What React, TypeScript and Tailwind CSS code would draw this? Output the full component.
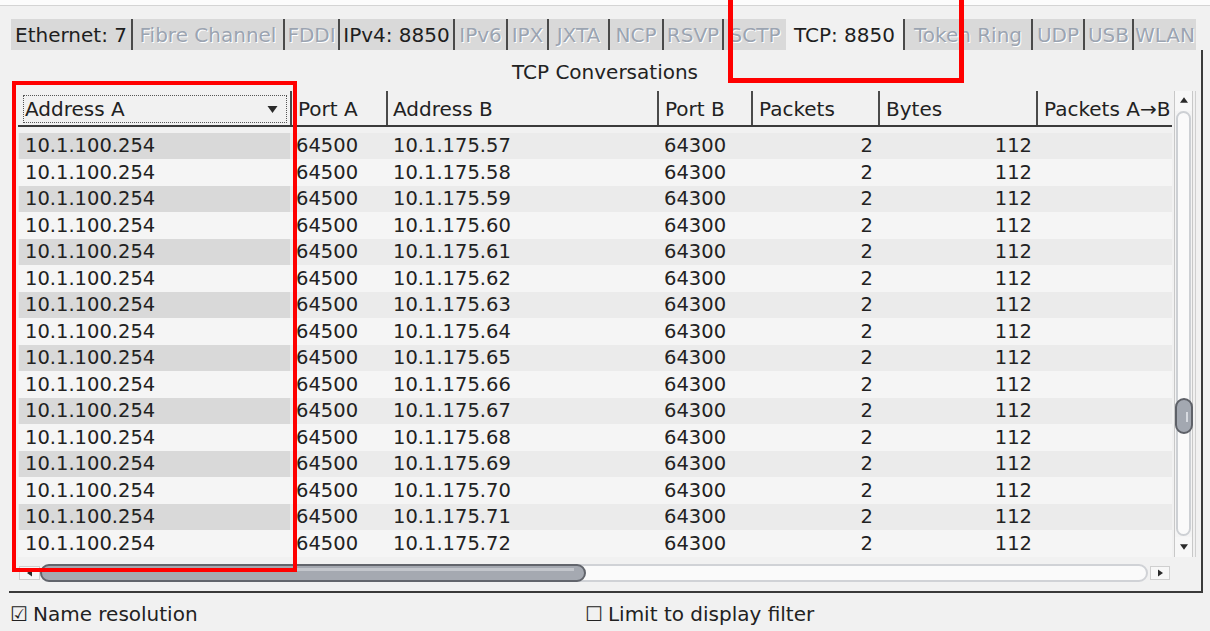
import React from "react";

const tabs = [
  { label: "Ethernet: 7", w: 120, enabled: true, sep: false },
  { label: "Fibre Channel", w: 152, enabled: false, sep: true },
  { label: "FDDI", w: 55, enabled: false, sep: true },
  { label: "IPv4: 8850", w: 115, enabled: true, sep: true },
  { label: "IPv6", w: 53, enabled: false, sep: true },
  { label: "IPX", w: 41, enabled: false, sep: true },
  { label: "JXTA", w: 61, enabled: false, sep: true },
  { label: "NCP", w: 54, enabled: false, sep: true },
  { label: "RSVP", w: 60, enabled: false, sep: true },
  { label: "SCTP", w: 64, enabled: false, sep: true },
  { label: "TCP: 8850", w: 117, enabled: true, sep: false, active: true },
  { label: "Token Ring", w: 128, enabled: false, sep: true },
  { label: "UDP", w: 52, enabled: false, sep: true },
  { label: "USB", w: 49, enabled: false, sep: true },
  { label: "WLAN", w: 64, enabled: false, sep: true },
];

const rows = Array.from({ length: 16 }, (_, i) => ({
  addrA: "10.1.100.254",
  portA: "64500",
  addrB: `10.1.175.${57 + i}`,
  portB: "64300",
  packets: "2",
  bytes: "112",
}));

const Tab = ({ t }: { t: (typeof tabs)[number] }) => (
  <div
    style={{ width: t.w }}
    className={`flex h-full shrink-0 items-center justify-center whitespace-nowrap text-[20px] ${
      t.active ? "bg-[#f1f1f1] text-[#1e1e1e]" : "bg-[#d9d9d9]"
    } ${t.sep ? "border-l-2 border-[#4a4a4a]" : ""} ${
      t.enabled ? "text-[#1e1e1e]" : "text-[#9ba4b1] [text-shadow:1px_1px_0_#ffffff]"
    }`}
  >
    {t.label}
  </div>
);

const Tri = ({ dir, className }: { dir: "up" | "down" | "left" | "right"; className?: string }) => {
  const pts = {
    up: "0,7 5,0 10,7",
    down: "0,0 10,0 5,7",
    left: "7,0 7,10 0,5",
    right: "0,0 0,10 7,5",
  }[dir];
  const vb = dir === "up" || dir === "down" ? "0 0 10 7" : "0 0 7 10";
  return (
    <svg viewBox={vb} className={className}>
      <polygon points={pts} fill="#2a2a2a" />
    </svg>
  );
};

export default function App() {
  return (
    <div className="relative h-[631px] w-[1210px] overflow-hidden bg-[#f1f1f1] font-['DejaVu_Sans',sans-serif] text-[#222]">
      <div className="h-[6px] border-b border-[#d4d4d4] bg-[#fcfcfc]" />

      {/* tab strip */}
      <div className="ml-[11px] mt-[13px] flex h-[31px]">
        {tabs.map((t) => (
          <Tab key={t.label} t={t} />
        ))}
      </div>

      {/* tab content */}
      <div className="ml-[9px] flex h-[543px] w-[1194px] flex-col border-b-2 border-r-2 border-[#3a3a3a]">
        <div className="flex h-[41px] items-center justify-center pt-[3px] text-[20px]">TCP Conversations</div>

        <div className="ml-[9px] flex h-[466px]">
          <div className="w-[1154px] overflow-hidden">
            {/* header */}
            <div className="flex h-[36px] border-b-2 border-[#3a3a3a] text-[20px] whitespace-nowrap">
              <div className="w-[274px] shrink-0 border-r-2 border-[#4a4a4a] pt-[4px]">
                <div className="ml-[5px] mr-[3px] flex h-[28px] items-center justify-between border border-dotted border-[#555] pl-[1px] pr-[8px]">
                  <span>Address A</span>
                  <Tri dir="down" className="h-[7px] w-[11px]" />
                </div>
              </div>
              <div className="flex w-[96px] shrink-0 items-center border-r-2 border-[#4a4a4a] pl-[6px] pt-[2px]">Port A</div>
              <div className="flex w-[271px] shrink-0 items-center border-r-2 border-[#4a4a4a] pl-[5px] pt-[2px]">Address B</div>
              <div className="flex w-[94px] shrink-0 items-center border-r-2 border-[#4a4a4a] pl-[6px] pt-[2px]">Port B</div>
              <div className="flex w-[127px] shrink-0 items-center border-r-2 border-[#4a4a4a] pl-[6px] pt-[2px]">Packets</div>
              <div className="flex w-[158px] shrink-0 items-center border-r-2 border-[#4a4a4a] pl-[6px] pt-[2px]">Bytes</div>
              <div className="flex w-[140px] shrink-0 items-center pl-[6px] pt-[2px]">Packets A→B</div>
            </div>

            {/* rows */}
            <div className="mt-[6px] text-[19.5px] leading-none">
              {rows.map((r, i) => {
                const odd = i % 2 === 0;
                return (
                  <div
                    key={r.addrB}
                    className={`flex ${odd ? "h-[26px] bg-[#ebebeb]" : "h-[27px] bg-[#f5f5f5]"}`}
                  >
                    <div className="w-[274px] shrink-0 pl-[1px] pr-[2px]">
                      <div className={`flex h-full items-center pl-[6px] ${odd ? "bg-[#d9d9d9]" : ""}`}>{r.addrA}</div>
                    </div>
                    <div className="flex w-[96px] shrink-0 items-center pl-[4px]">{r.portA}</div>
                    <div className="flex w-[271px] shrink-0 items-center pl-[5px]">{r.addrB}</div>
                    <div className="flex w-[94px] shrink-0 items-center pl-[5px]">{r.portB}</div>
                    <div className="flex w-[127px] shrink-0 items-center justify-end pr-[7px]">{r.packets}</div>
                    <div className="flex w-[158px] shrink-0 items-center justify-end pr-[6px]">{r.bytes}</div>
                    <div className="w-[140px] shrink-0" />
                  </div>
                );
              })}
            </div>
          </div>

          {/* vertical scrollbar */}
          <div className="flex w-[24px] flex-col border-r border-[#cfcfcf] pl-[2px] pr-[2px]">
            <div className="flex h-[20px] items-start justify-center border-x border-[#c8c8c8] bg-[#f7f7f7] pt-[6px]">
              <Tri dir="up" className="h-[6px] w-[8px]" />
            </div>
            <div className="flex flex-1 flex-col border-x border-[#c8c8c8] bg-[#f4f4f4] px-[1px]">
              <div className="relative mb-[1px] flex-1 rounded-full border-2 border-[#cdd0d4] bg-[#fafafa]">
                <div className="absolute left-[-3px] top-[285px] h-[36px] w-[18px] rounded-[9px] border-2 border-[#5e6168] bg-[#a3a8b1]">
                  <div className="ml-[9px] mt-[12px] h-[10px] w-[2px] bg-[#d7dae0]" />
                </div>
              </div>
            </div>
            <div className="flex h-[20px] items-center justify-center border-x border-[#c8c8c8] bg-[#f7f7f7]">
              <Tri dir="down" className="h-[6px] w-[8px]" />
            </div>
          </div>
        </div>

        {/* horizontal scrollbar */}
        <div className="ml-[10px] mt-[6px] flex h-[19px] w-[1152px] items-center">
          <div className="flex h-[14px] w-[21px] items-center justify-center border border-[#cfcfcf] bg-[#f7f7f7]">
            <Tri dir="left" className="h-[8px] w-[5px]" />
          </div>
          <div className="relative h-[18px] w-[1108px] rounded-full border-2 border-[#d0d2d6] bg-[#fafafa]">
            <div className="absolute left-[-2px] top-[-2px] h-[18px] w-[546px] rounded-full border-2 border-[#62656c] bg-[#a5a9b1]">
              <div className="mx-[10px] mt-[2px] h-[3px] bg-[#c3c6cc]" />
            </div>
          </div>
          <div className="ml-[2px] flex h-[14px] w-[20px] items-center justify-center border border-[#cfcfcf] bg-[#f7f7f7]">
            <Tri dir="right" className="h-[8px] w-[5px]" />
          </div>
        </div>
      </div>

      {/* bottom options */}
      <div className="flex h-[38px] items-center pl-[10px] pt-[4px] text-[20px]">
        <div className="flex w-[575px] items-center">
          <span className="mr-[5px] text-[20px] leading-none">☑</span>
          <span>Name resolution</span>
        </div>
        <div className="flex items-center">
          <span className="mr-[5px] text-[20px] leading-none">☐</span>
          <span>Limit to display filter</span>
        </div>
      </div>

      {/* annotation boxes */}
      <div className="pointer-events-none absolute left-[12px] top-[81px] h-[491px] w-[285px] border-4 border-[#ff0000]" />
      <div className="pointer-events-none absolute left-[728px] top-[-6px] h-[89px] w-[236px] border-[5px] border-[#ff0000]" />
    </div>
  );
}
